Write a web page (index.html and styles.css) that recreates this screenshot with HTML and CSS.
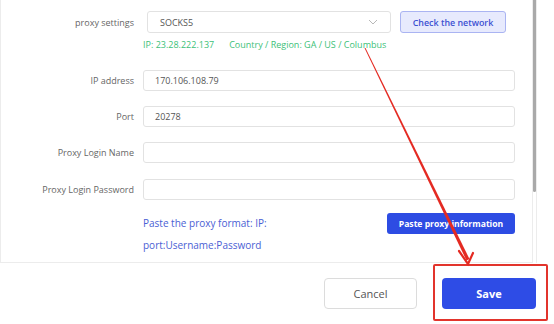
FILE: index.html
```html
<!DOCTYPE html>
<html>
<head>
<meta charset="utf-8">
<link rel="stylesheet" href="styles.css">
</head>
<body>
<div class="page">
  <div class="frame">
    <div class="panel">
      <div class="row row-first">
        <div class="label">proxy settings</div>
        <div class="field field-select">
          <div class="select">
            <span>SOCKS5</span>
            <svg class="chev" width="10" height="6" viewBox="0 0 10 6"><path d="M1 1 L5 5 L9 1" fill="none" stroke="#b8b8b8" stroke-width="1"/></svg>
          </div>
          <button class="btn-check">Check the network</button>
        </div>
      </div>
      <div class="row row-info">
        <div class="label"></div>
        <div class="info"><span>IP: 23.28.222.137</span><span>Country / Region: GA / US / Columbus</span></div>
      </div>
      <div class="row row-ip">
        <div class="label">IP address</div>
        <div class="input">170.106.108.79</div>
      </div>
      <div class="row row-gap">
        <div class="label">Port</div>
        <div class="input">20278</div>
      </div>
      <div class="row row-gap">
        <div class="label">Proxy Login Name</div>
        <div class="input"></div>
      </div>
      <div class="row row-gap2">
        <div class="label">Proxy Login Password</div>
        <div class="input"></div>
      </div>
      <div class="row row-paste">
        <div class="label"></div>
        <div class="paste">
          <div class="paste-text">Paste the proxy format: IP: port:Username:Password</div>
          <button class="btn-paste">Paste proxy information</button>
        </div>
      </div>
    </div>
    <div class="scrollbar"><div class="thumb"></div></div>
  </div>
  <div class="footer">
    <button class="btn-cancel">Cancel</button>
    <button class="btn-save">Save</button>
  </div>
  <div class="highlight"></div>
  <svg class="arrow" width="554" height="324" viewBox="0 0 554 324">
    <polygon points="364.5,48 365.5,48 469.5,259 466.5,260.5" fill="#e42a22"/>
    <path d="M459 251 L468 264 L473 253" fill="none" stroke="#e42a22" stroke-width="2.2" stroke-linejoin="miter" stroke-linecap="round"/>
  </svg>
</div>
</body>
</html>
```
FILE: styles.css
```css
* { box-sizing: border-box; }
html, body { margin: 0; padding: 0; }
body {
  background: #ffffff;
  font-family: "Open Sans", "Liberation Sans", sans-serif;
  font-size: 9px;
  color: #555;
}
.page {
  position: relative;
  width: 554px;
  height: 324px;
  overflow: hidden;
}
.frame {
  display: flex;
  height: 263px;
}
.panel {
  width: 533px;
  height: 263px;
  border-left: 1px solid #ececec;
  border-bottom: 1px solid #ececec;
  border-right: 1px solid #ececec;
  padding-top: 11px;
}
.scrollbar {
  width: 4px;
  height: 263px;
  border-right: 1px solid #ececec;
}
.thumb {
  width: 3px;
  height: 192px;
  background: #a9a9a9;
  border-radius: 0 0 2px 2px;
}
.row {
  display: grid;
  grid-template-columns: 133px 372px;
  column-gap: 9px;
  align-items: center;
}
.label {
  text-align: right;
  color: #666;
  font-size: 9px;
}
.field-select {
  display: flex;
  align-items: center;
  padding-left: 4px;
}
.select {
  width: 244px;
  height: 22px;
  border: 1px solid #e2e2e2;
  border-radius: 3px;
  display: flex;
  align-items: center;
  justify-content: space-between;
  padding: 0 12px 0 12px;
  color: #555;
}
.chev { display: block; }
.btn-check {
  margin-left: 9px;
  width: 106px;
  height: 22px;
  background: #e7eafd;
  border: 1px solid #aab4f2;
  border-radius: 3px;
  color: #3c51d2;
  font-family: inherit;
  font-size: 8.9px;
  font-weight: 600;
  padding: 0;
}
.row-info { margin-top: 5px; }
.info {
  display: flex;
  gap: 15px;
  color: #3cbf78;
  font-size: 9px;
  line-height: 14px;
}
.row-ip { margin-top: 18px; }
.row-gap { margin-top: 15px; }
.row-gap2 { margin-top: 16px; }
.input {
  height: 21px;
  border: 1px solid #e2e2e2;
  border-radius: 3px;
  padding: 0 11px;
  display: flex;
  align-items: center;
  color: #555;
}
.row-paste {
  margin-top: 12px;
  align-items: start;
}
.paste {
  display: flex;
  justify-content: space-between;
  align-items: flex-start;
}
.paste-text {
  width: 140px;
  color: #4a60d4;
  line-height: 22px;
  font-size: 10px;
}
.btn-paste {
  margin-top: 1px;
  width: 128px;
  height: 21px;
  background: #2d4ce3;
  border: none;
  border-radius: 3px;
  color: #fff;
  font-family: inherit;
  font-size: 8.6px;
  font-weight: 700;
  padding: 0;
}
.footer {
  display: flex;
  justify-content: flex-end;
  gap: 25px;
  padding: 15px 18px 0 0;
}
.btn-cancel {
  width: 93px;
  height: 31px;
  background: #fff;
  border: 1px solid #dcdcdc;
  border-radius: 4px;
  color: #555;
  font-family: inherit;
  font-size: 11px;
  padding: 0;
}
.btn-save {
  width: 94px;
  height: 31px;
  background: #2e4ce6;
  border: none;
  border-radius: 4px;
  color: #fff;
  font-family: inherit;
  font-size: 11px;
  font-weight: 700;
  padding: 0;
}
.highlight {
  position: absolute;
  left: 433px;
  top: 264px;
  width: 115px;
  height: 57px;
  border: 2px solid #e2342c;
  border-radius: 2px;
}
.arrow {
  position: absolute;
  left: 0;
  top: 0;
  pointer-events: none;
}
```
